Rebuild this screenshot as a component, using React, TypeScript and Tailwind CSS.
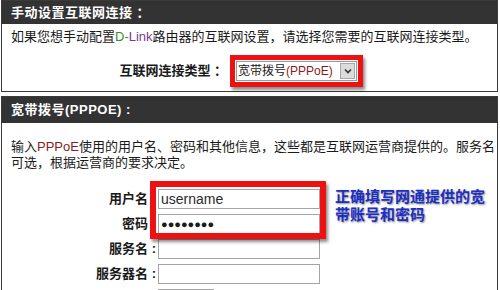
const cjk = 'font-["Liberation_Sans","Noto_Sans_CJK_SC",sans-serif]'

export default function App() {
  return (
    <div className={`relative w-[500px] h-[290px] overflow-hidden bg-white text-[#1a1a1a] ${cjk}`}>
      {/* 手动设置 box */}
      <div className="ml-[1px] w-[497px] border border-[#3a3a3a]">
        <div className="h-[23px] bg-[#333333] pl-[9px] flex items-center text-white font-bold text-[13px] tracking-[0.5px]">
          手动设置互联网连接 ：
        </div>
        <div className="h-[67px] pl-[9px]">
          <p className="pt-[5px] text-[13px] leading-[16px] whitespace-nowrap">
            如果您想手动配置<span className="text-[#3f8a2c]">D-</span>
            <span className="text-[#7a3a90]">Link</span>路由器的互联网设置，请选择您需要的互联网连接类型。
          </p>
          <div className="mt-[16px] flex items-center">
            <span className="ml-[100px] w-[116px] text-right font-bold text-[13px]">互联网连接类型 ：</span>
            <div className="ml-[9px] w-[121px] h-[20px] border border-[#9a9a9a] bg-white flex items-center">
              <span className="flex-1 pl-[1px] text-[12px] leading-[18px] whitespace-nowrap overflow-hidden">
                宽带拨号<span className="text-[#8a1c1c]">(PPPoE)</span>
              </span>
              <span className="w-[15px] h-[16px] mr-[1px] bg-[#dcdcdc] border border-[#a8a8a8] flex items-center justify-center">
                <svg width="8" height="6" viewBox="0 0 8 6">
                  <path d="M1 1.5 L4 4.5 L7 1.5" stroke="#333" strokeWidth="1.6" fill="none" />
                </svg>
              </span>
            </div>
          </div>
        </div>
      </div>

      {/* 宽带拨号 box */}
      <div className="mt-[4px] ml-[1px] w-[497px] border border-[#3a3a3a] h-[200px]">
        <div className="h-[26px] bg-[#333333] pl-[9px] flex items-center text-white font-bold text-[13px] tracking-[0.5px]">
          宽带拨号(PPPOE) :
        </div>
        <p className="pl-[9px] pt-[16px] text-[13px] leading-[16px] whitespace-nowrap">
          输入<span className="text-[#8a1c1c]">PPPoE</span>使用的用户名、密码和其他信息，这些都是互联网运营商提供的。服务名
          <br />
          可选，根据运营商的要求决定。
        </p>
        <div className="mt-[18px] flex flex-col gap-[5px]">
          <Row label="用户名" value="username" />
          <Row label="密码" value="●●●●●●●●" dots />
          <Row label="服务名" />
          <Row label="服务器名" />
          <Row label="" short />
        </div>
      </div>

      {/* red highlight overlays */}
      <div className="absolute left-[230px] top-[55px] w-[133px] h-[32px] border-[5px] border-[#ee1111] shadow-[2px_3px_3px_rgba(0,0,0,0.45)]" />
      <div className="absolute left-[150px] top-[181px] w-[176px] h-[58px] border-[6px] border-[#ee1111] shadow-[2px_3px_3px_rgba(0,0,0,0.45)]" />

      {/* annotation */}
      <div className="absolute left-[335px] top-[188px] w-[160px] text-[15px] leading-[18px] font-bold text-[#1c2fc4] [text-shadow:1px_1px_2px_rgba(0,0,0,0.45)]">
        正确填写网通提供的宽带账号和密码
      </div>
    </div>
  )
}

function Row({ label, value, dots, short }: { label: string; value?: string; dots?: boolean; short?: boolean }) {
  return (
    <div className="flex items-center h-[20px]">
      <span className="w-[154px] text-right font-bold text-[13px] whitespace-nowrap">
        {label ? `${label} :` : ''}
      </span>
      <div
        className={`ml-[2px] h-[20px] border border-[#a5a5a5] bg-white flex items-center pl-[2px] ${short ? 'w-[56px]' : 'w-[162px]'}`}
      >
        {value && (
          <span className={`${dots ? 'text-[11px]' : 'text-[14px] text-[#2a2a2a]'} font-["Liberation_Sans",sans-serif] leading-[18px]`}>
            {value}
          </span>
        )}
      </div>
    </div>
  )
}
